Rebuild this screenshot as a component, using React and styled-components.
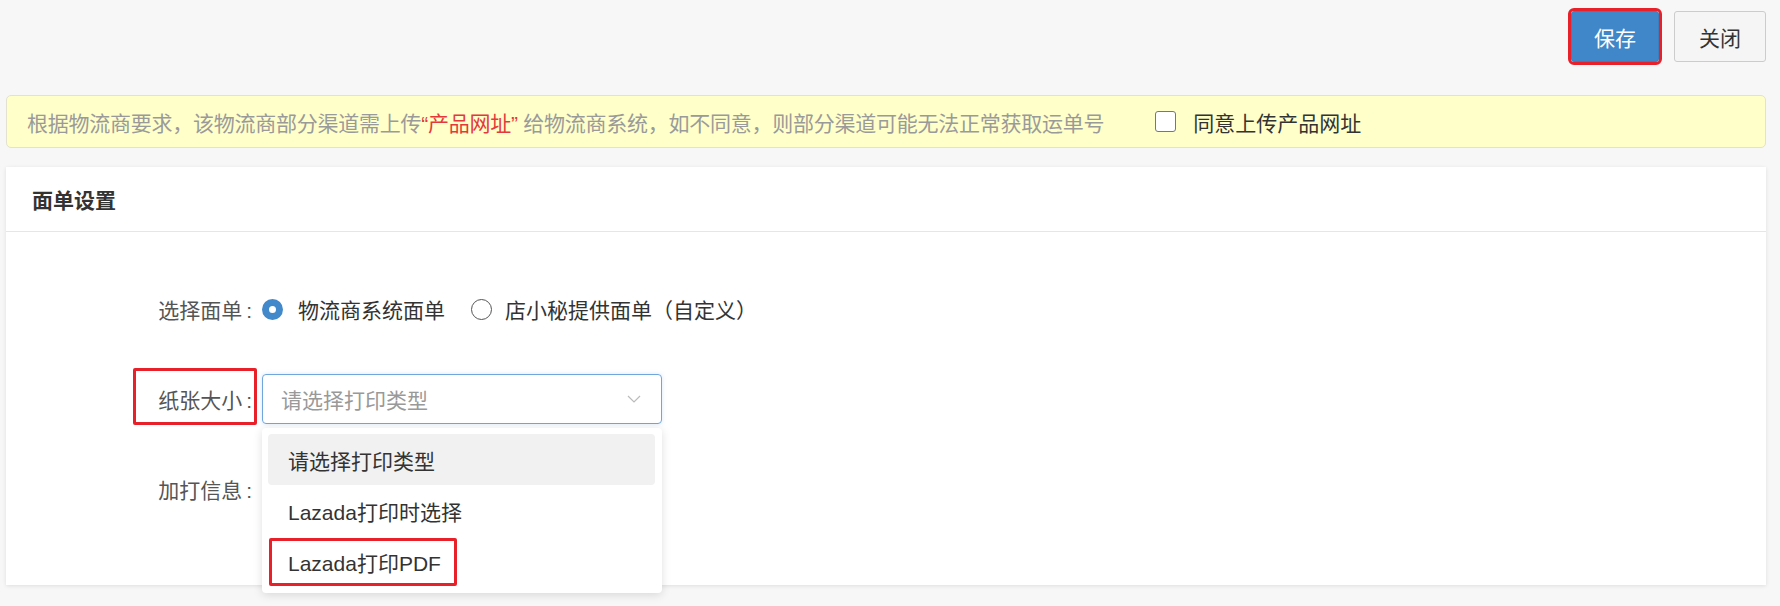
import React from "react";
import styled, { createGlobalStyle } from "styled-components";

const GlobalStyle = createGlobalStyle`
  body {
    margin: 0;
    background: #f7f7f7;
    font-family: "Liberation Sans", "Noto Sans CJK SC", sans-serif;
    color: #333;
  }
`;

const Page = styled.div`
  padding: 11px 14px 20px 6px;
`;

const Toolbar = styled.div`
  display: flex;
  justify-content: flex-end;
  align-items: center;
  gap: 15px;
`;

const Button = styled.button`
  height: 51px;
  width: ${(p) => p.$width}px;
  padding: 0;
  font-family: inherit;
  font-size: 21px;
  border-radius: 3px;
  cursor: pointer;
  background: ${(p) => (p.$primary ? "#3f87c8" : "#f5f5f5")};
  color: ${(p) => (p.$primary ? "#fff" : "#333")};
  border: 1px solid ${(p) => (p.$primary ? "#3a7fbd" : "#ccc")};
  outline: ${(p) => (p.$marked ? "3px solid #e8202a" : "none")};
`;

const Notice = styled.div`
  margin-top: 33px;
  height: 53px;
  box-sizing: border-box;
  display: flex;
  align-items: center;
  padding-left: 20px;
  background: #ffffc9;
  border: 1px solid #e2e2cf;
  border-radius: 5px;
  font-size: 21px;
  color: #9a9a9a;
`;

const NoticeText = styled.span`
  letter-spacing: -0.25px;
`;

const Hot = styled.span`
  color: #e4393c;
`;

const CheckLabel = styled.label`
  display: flex;
  align-items: center;
  gap: 17px;
  margin-left: 51px;
  color: #333;
`;

const CheckBox = styled.span`
  width: 21px;
  height: 21px;
  box-sizing: border-box;
  border: 1px solid #777;
  border-radius: 3px;
  background: #fff;
`;

const Card = styled.section`
  margin-top: 19px;
  background: #fff;
  box-shadow: 0 1px 4px rgba(0, 0, 0, 0.1);
`;

const CardHeader = styled.div`
  height: 65px;
  box-sizing: border-box;
  display: flex;
  align-items: center;
  padding: 0 26px;
  border-bottom: 1px solid #e6e6e6;
  font-size: 21px;
  font-weight: bold;
  color: #333;
`;

const CardBody = styled.div`
  padding: 52px 0 71px;
`;

const FormRow = styled.div`
  display: flex;
  align-items: center;
  height: 50px;

  & + & {
    margin-top: 40px;
  }
`;

const Label = styled.div`
  position: relative;
  flex-shrink: 0;
  width: 246px;
  margin-right: 10px;
  text-align: right;
  font-size: 21px;
  color: #555;
`;

const Colon = styled.span`
  margin-left: 4px;
`;

const Mark = styled.span`
  position: absolute;
  left: ${(p) => p.$left}px;
  top: ${(p) => p.$top}px;
  width: ${(p) => p.$w}px;
  height: ${(p) => p.$h}px;
  box-sizing: border-box;
  border: 3px solid #e8202a;
  border-radius: 2px;
  pointer-events: none;
`;

const RadioGroup = styled.div`
  display: flex;
  align-items: center;
  gap: 26px;
`;

const RadioItem = styled.label`
  display: flex;
  align-items: center;
  gap: ${(p) => (p.$checked ? 15 : 13)}px;
  font-size: 21px;
  color: #333;
`;

const RadioDot = styled.span`
  width: 21px;
  height: 21px;
  box-sizing: border-box;
  border-radius: 50%;
  border: ${(p) => (p.$checked ? "7px solid #4289cc" : "1px solid #555")};
  background: #fff;
`;

const Select = styled.div`
  position: relative;
  width: 400px;
  height: 50px;
  box-sizing: border-box;
  display: flex;
  align-items: center;
  justify-content: space-between;
  padding: 0 20px 0 18px;
  border: 1px solid #6fa6dc;
  border-radius: 4px;
  box-shadow: 0 0 4px rgba(102, 165, 225, 0.25);
  font-size: 21px;
  color: #999;
`;

const Menu = styled.ul`
  position: absolute;
  top: calc(100% + 5px);
  left: -1px;
  width: 400px;
  box-sizing: border-box;
  margin: 0;
  padding: 6px 7px 6px 6px;
  list-style: none;
  background: #fff;
  border-radius: 4px;
  box-shadow: 0 2px 10px rgba(0, 0, 0, 0.13);
  z-index: 10;
`;

const Option = styled.li`
  position: relative;
  height: 51px;
  display: flex;
  align-items: center;
  padding-left: 20px;
  border-radius: 4px;
  background: ${(p) => (p.$active ? "#f1f1f1" : "transparent")};
  color: #333;
`;

const Chevron = () => (
  <svg width="14" height="8" viewBox="0 0 14 8">
    <polyline points="1,1 7,7 13,1" fill="none" stroke="#bbb" strokeWidth="1.2" />
  </svg>
);

export default function App() {
  return (
    <Page>
      <GlobalStyle />
      <Toolbar>
        <Button $primary $marked $width={88}>保存</Button>
        <Button $width={92}>关闭</Button>
      </Toolbar>

      <Notice>
        <NoticeText>
          根据物流商要求，该物流商部分渠道需上传<Hot>“产品网址”</Hot> 给物流商系统，如不同意，则部分渠道可能无法正常获取运单号
        </NoticeText>
        <CheckLabel>
          <CheckBox />
          同意上传产品网址
        </CheckLabel>
      </Notice>

      <Card>
        <CardHeader>面单设置</CardHeader>
        <CardBody>
          <FormRow>
            <Label>
              选择面单<Colon>:</Colon>
            </Label>
            <RadioGroup>
              <RadioItem $checked>
                <RadioDot $checked />
                物流商系统面单
              </RadioItem>
              <RadioItem>
                <RadioDot />
                店小秘提供面单（自定义）
              </RadioItem>
            </RadioGroup>
          </FormRow>

          <FormRow>
            <Label>
              纸张大小<Colon>:</Colon>
              <Mark $left={127} $top={-16} $w={124} $h={57} />
            </Label>
            <Select>
              请选择打印类型
              <Chevron />
              <Menu>
                <Option $active>请选择打印类型</Option>
                <Option>Lazada打印时选择</Option>
                <Option>
                  Lazada打印PDF
                  <Mark $left={1} $top={2} $w={188} $h={48} />
                </Option>
              </Menu>
            </Select>
          </FormRow>

          <FormRow>
            <Label>
              加打信息<Colon>:</Colon>
            </Label>
          </FormRow>
        </CardBody>
      </Card>
    </Page>
  );
}
